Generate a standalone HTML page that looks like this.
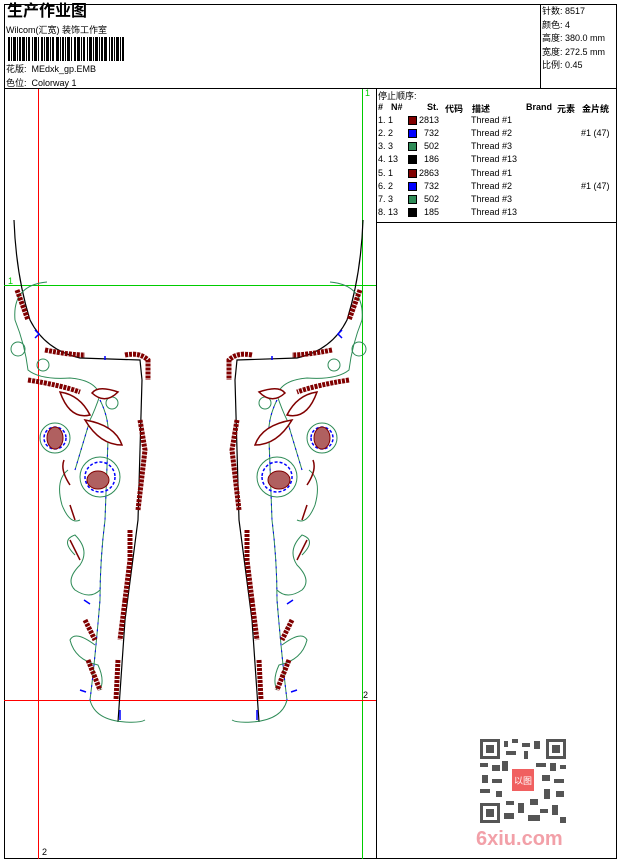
<!DOCTYPE html>
<html><head><meta charset="utf-8"><style>
body{margin:0;background:#fff;width:620px;height:860px;position:relative;overflow:hidden;font-family:"Liberation Sans","Noto Sans CJK SC",sans-serif;font-size:9px;color:#000}
.a{position:absolute}
.b{border:1px solid #000;position:absolute;box-sizing:border-box}
.row{position:absolute;left:378px;height:13px;font-size:9px;line-height:13px;white-space:nowrap}
.sw{position:absolute;width:9px;height:9px;top:2px;left:30px;border:1px solid #000;box-sizing:border-box}
</style></head><body>
<div class="b" style="left:4px;top:4px;width:613px;height:855px"></div>
<div class="a" style="left:4px;top:88px;width:613px;height:1px;background:#000"></div>
<div class="a" style="left:540px;top:4px;width:1px;height:84px;background:#000"></div>
<div class="a" style="left:376px;top:88px;width:1px;height:771px;background:#000"></div>
<div class="a" style="left:376px;top:222px;width:241px;height:1px;background:#000"></div>
<div class="a" style="left:7px;top:3px;font-size:16px;font-weight:bold;line-height:18px">生产作业图</div>
<div class="a" style="left:6px;top:23px;font-size:9px">Wilcom(汇宽) 装饰工作室</div>
<svg class="a" style="left:8px;top:37px" width="120" height="24"><g fill="#000">
<rect x="0" y="0" width="2" height="24"/><rect x="3" y="0" width="1" height="24"/><rect x="5" y="0" width="3" height="24"/><rect x="9" y="0" width="1" height="24"/><rect x="11" y="0" width="2" height="24"/><rect x="14" y="0" width="3" height="24"/><rect x="18" y="0" width="1" height="24"/><rect x="20" y="0" width="2" height="24"/><rect x="24" y="0" width="1" height="24"/><rect x="26" y="0" width="3" height="24"/><rect x="30" y="0" width="1" height="24"/><rect x="33" y="0" width="2" height="24"/><rect x="36" y="0" width="1" height="24"/><rect x="38" y="0" width="3" height="24"/><rect x="42" y="0" width="1" height="24"/><rect x="44" y="0" width="2" height="24"/><rect x="48" y="0" width="3" height="24"/><rect x="52" y="0" width="1" height="24"/><rect x="54" y="0" width="2" height="24"/><rect x="57" y="0" width="1" height="24"/><rect x="59" y="0" width="3" height="24"/><rect x="63" y="0" width="1" height="24"/><rect x="66" y="0" width="2" height="24"/><rect x="69" y="0" width="3" height="24"/><rect x="73" y="0" width="1" height="24"/><rect x="75" y="0" width="2" height="24"/><rect x="79" y="0" width="1" height="24"/><rect x="81" y="0" width="3" height="24"/><rect x="85" y="0" width="1" height="24"/><rect x="87" y="0" width="3" height="24"/><rect x="91" y="0" width="1" height="24"/><rect x="93" y="0" width="2" height="24"/><rect x="96" y="0" width="3" height="24"/><rect x="101" y="0" width="1" height="24"/><rect x="103" y="0" width="2" height="24"/><rect x="106" y="0" width="1" height="24"/><rect x="108" y="0" width="3" height="24"/><rect x="112" y="0" width="1" height="24"/><rect x="114" y="0" width="2" height="24"/></g></svg>
<div class="a" style="left:6px;top:62px">花版:&nbsp; MEdxk_gp.EMB</div>
<div class="a" style="left:6px;top:76px">色位:&nbsp; Colorway 1</div>
<div class="a" style="left:542px;top:5px;line-height:13.5px">针数: 8517<br>颜色: 4<br>高度: 380.0 mm<br>宽度: 272.5 mm<br>比例: 0.45</div>
<div class="a" style="left:378px;top:89px">停止顺序:</div>
<div class="a" style="left:378px;top:102px;font-weight:bold;text-decoration:underline;white-space:nowrap"><span class="a" style="left:0">#</span><span class="a" style="left:13px">N#</span><span class="a" style="left:49px">St.</span><span class="a" style="left:67px">代码</span><span class="a" style="left:94px">描述</span><span class="a" style="left:148px">Brand</span><span class="a" style="left:179px">元素</span><span class="a" style="left:204px">金片统</span></div>
<div class="row" style="top:114px">1. 1<span class="sw" style="background:#800000"></span><span class="a" style="left:41px">2813</span><span class="a" style="left:93px">Thread #1</span></div>
<div class="row" style="top:127px">2. 2<span class="sw" style="background:#0000ff"></span><span class="a" style="left:46px">732</span><span class="a" style="left:93px">Thread #2</span><span class="a" style="left:203px">#1 (47)</span></div>
<div class="row" style="top:140px">3. 3<span class="sw" style="background:#2e8b57"></span><span class="a" style="left:46px">502</span><span class="a" style="left:93px">Thread #3</span></div>
<div class="row" style="top:153px">4. 13<span class="sw" style="background:#000"></span><span class="a" style="left:46px">186</span><span class="a" style="left:93px">Thread #13</span></div>
<div class="row" style="top:167px">5. 1<span class="sw" style="background:#800000"></span><span class="a" style="left:41px">2863</span><span class="a" style="left:93px">Thread #1</span></div>
<div class="row" style="top:180px">6. 2<span class="sw" style="background:#0000ff"></span><span class="a" style="left:46px">732</span><span class="a" style="left:93px">Thread #2</span><span class="a" style="left:203px">#1 (47)</span></div>
<div class="row" style="top:193px">7. 3<span class="sw" style="background:#2e8b57"></span><span class="a" style="left:46px">502</span><span class="a" style="left:93px">Thread #3</span></div>
<div class="row" style="top:206px">8. 13<span class="sw" style="background:#000"></span><span class="a" style="left:46px">185</span><span class="a" style="left:93px">Thread #13</span></div>

<svg class="a" style="left:0;top:0" width="620" height="860">
<line x1="38.5" y1="89" x2="38.5" y2="859" stroke="#f00"/>
<line x1="362.5" y1="89" x2="362.5" y2="859" stroke="#0c0"/>
<line x1="4" y1="285.5" x2="376" y2="285.5" stroke="#0c0"/>
<line x1="4" y1="700.5" x2="376" y2="700.5" stroke="#f00"/>
<text x="8" y="284" font-size="9" fill="#0c0" font-family="Liberation Sans">1</text>
<text x="365" y="96" font-size="9" fill="#0c0" font-family="Liberation Sans">1</text>
<text x="363" y="698" font-size="9" fill="#000" font-family="Liberation Sans">2</text>
<text x="42" y="855" font-size="9" fill="#000" font-family="Liberation Sans">2</text>
<defs><g id="h">
<path d="M14 220 Q16 275 30 320 Q45 350 80 358 L140 360 L142 380 L138 520 L125 620 L118 722" fill="none" stroke="#000" stroke-width="1.2"/>
<path d="M47 282 Q12 285 15 320 Q25 345 28 370 Q40 380 70 378 Q95 380 100 395 Q95 410 90 420 L75 470 M100 400 Q110 420 108 440 L105 520 Q100 560 100 600 Q95 660 90 700 Q95 720 125 722 Q140 723 145 720" fill="none" stroke="#2e8b57" stroke-width="1"/>
<path d="M100 400 Q110 420 108 440 L105 520 Q100 560 100 600 Q95 660 90 700 M75 470 L90 420" fill="none" stroke="#00f" stroke-width="1" stroke-dasharray="2 5"/>
<path d="M68 470 Q55 480 62 505 Q70 525 80 520 M75 555 Q60 540 75 535 Q90 550 80 565 Q65 580 75 590 Q90 600 100 590 M95 645 Q75 630 70 640 Q75 660 98 665 Q105 680 100 690" fill="none" stroke="#2e8b57" stroke-width="1"/>
<circle cx="18" cy="349" r="7" fill="none" stroke="#2e8b57"/><circle cx="43" cy="365" r="6" fill="none" stroke="#2e8b57"/><circle cx="112" cy="403" r="6" fill="none" stroke="#2e8b57"/>
<circle cx="55" cy="438" r="15" fill="none" stroke="#2e8b57"/><circle cx="55" cy="438" r="11" fill="none" stroke="#00f" stroke-width="1.5" stroke-dasharray="3 2"/>
<circle cx="100" cy="477" r="20" fill="none" stroke="#2e8b57"/><circle cx="100" cy="477" r="15" fill="none" stroke="#00f" stroke-width="1.5" stroke-dasharray="3 2"/>
<ellipse cx="55" cy="438" rx="8" ry="11" fill="#b06060" stroke="#800000"/>
<ellipse cx="98" cy="480" rx="11" ry="9" fill="#b06060" stroke="#800000"/>
<path d="M60 392 Q80 395 90 415 Q70 420 60 392Z M85 420 Q115 425 122 445 Q100 445 85 420Z M92 393 Q98 385 118 392 Q105 405 92 393Z" fill="#fff" stroke="#800000" stroke-width="1.5"/>
<path d="M28 380 Q60 385 80 392 M17 290 L28 320 M45 350 Q70 355 85 355 M125 355 Q140 352 148 360 L148 380 M140 420 L145 450 L138 510 M130 530 L130 560 L125 600 M125 600 L120 640 M118 660 L116 700 M85 620 L95 640 M88 660 L100 690" fill="none" stroke="#800000" stroke-width="5" stroke-dasharray="3 1"/>
<path d="M64 460 Q60 470 70 485 M70 505 L75 520 M70 540 L80 560" fill="none" stroke="#800000" stroke-width="1.5"/>
<path d="M35 330 l4 4 -4 4 M105 360 l0 -4 M84 600 l6 4 M80 690 l6 2 M120 710 l0 10" fill="none" stroke="#00f" stroke-width="1.5"/>
</g></defs>
<use href="#h"/>
<use href="#h" transform="translate(377,0) scale(-1,1)"/>
</svg>

<svg class="a" style="left:480px;top:739px" width="86" height="84">
<rect width="86" height="84" fill="#fff"/>
<g fill="#555">
<rect x="0" y="0" width="20" height="20"/><rect x="66" y="0" width="20" height="20"/><rect x="0" y="64" width="20" height="20"/>
</g>
<g fill="#fff"><rect x="3" y="3" width="14" height="14"/><rect x="69" y="3" width="14" height="14"/><rect x="3" y="67" width="14" height="14"/></g>
<g fill="#555"><rect x="6" y="6" width="8" height="8"/><rect x="72" y="6" width="8" height="8"/><rect x="6" y="70" width="8" height="8"/>
<rect x="24" y="2" width="4" height="6"/><rect x="32" y="0" width="6" height="4"/><rect x="42" y="4" width="8" height="4"/><rect x="54" y="2" width="6" height="8"/><rect x="26" y="12" width="10" height="4"/><rect x="44" y="12" width="4" height="8"/>
<rect x="0" y="24" width="8" height="4"/><rect x="12" y="26" width="8" height="6"/><rect x="22" y="22" width="6" height="10"/><rect x="56" y="24" width="10" height="4"/><rect x="70" y="24" width="6" height="8"/><rect x="80" y="26" width="6" height="4"/>
<rect x="2" y="36" width="6" height="8"/><rect x="12" y="40" width="10" height="4"/><rect x="62" y="36" width="8" height="6"/><rect x="74" y="40" width="10" height="4"/><rect x="0" y="50" width="10" height="4"/><rect x="16" y="52" width="6" height="6"/><rect x="64" y="50" width="6" height="10"/><rect x="76" y="52" width="8" height="6"/>
<rect x="26" y="62" width="8" height="4"/><rect x="38" y="64" width="6" height="10"/><rect x="50" y="60" width="8" height="6"/><rect x="24" y="74" width="10" height="6"/><rect x="60" y="70" width="8" height="4"/><rect x="72" y="66" width="6" height="10"/><rect x="48" y="76" width="12" height="6"/><rect x="80" y="78" width="6" height="6"/></g>
<rect x="32" y="30" width="22" height="22" fill="#f06060"/>
<text x="43" y="45" font-size="9" fill="#fff" text-anchor="middle" font-family="Noto Sans CJK SC">以图</text>
</svg>
<div class="a" style="left:476px;top:828px;font-size:20px;font-weight:bold;color:#f2a0a8;font-family:'Liberation Sans',sans-serif">6xiu.com</div>
</body></html>
